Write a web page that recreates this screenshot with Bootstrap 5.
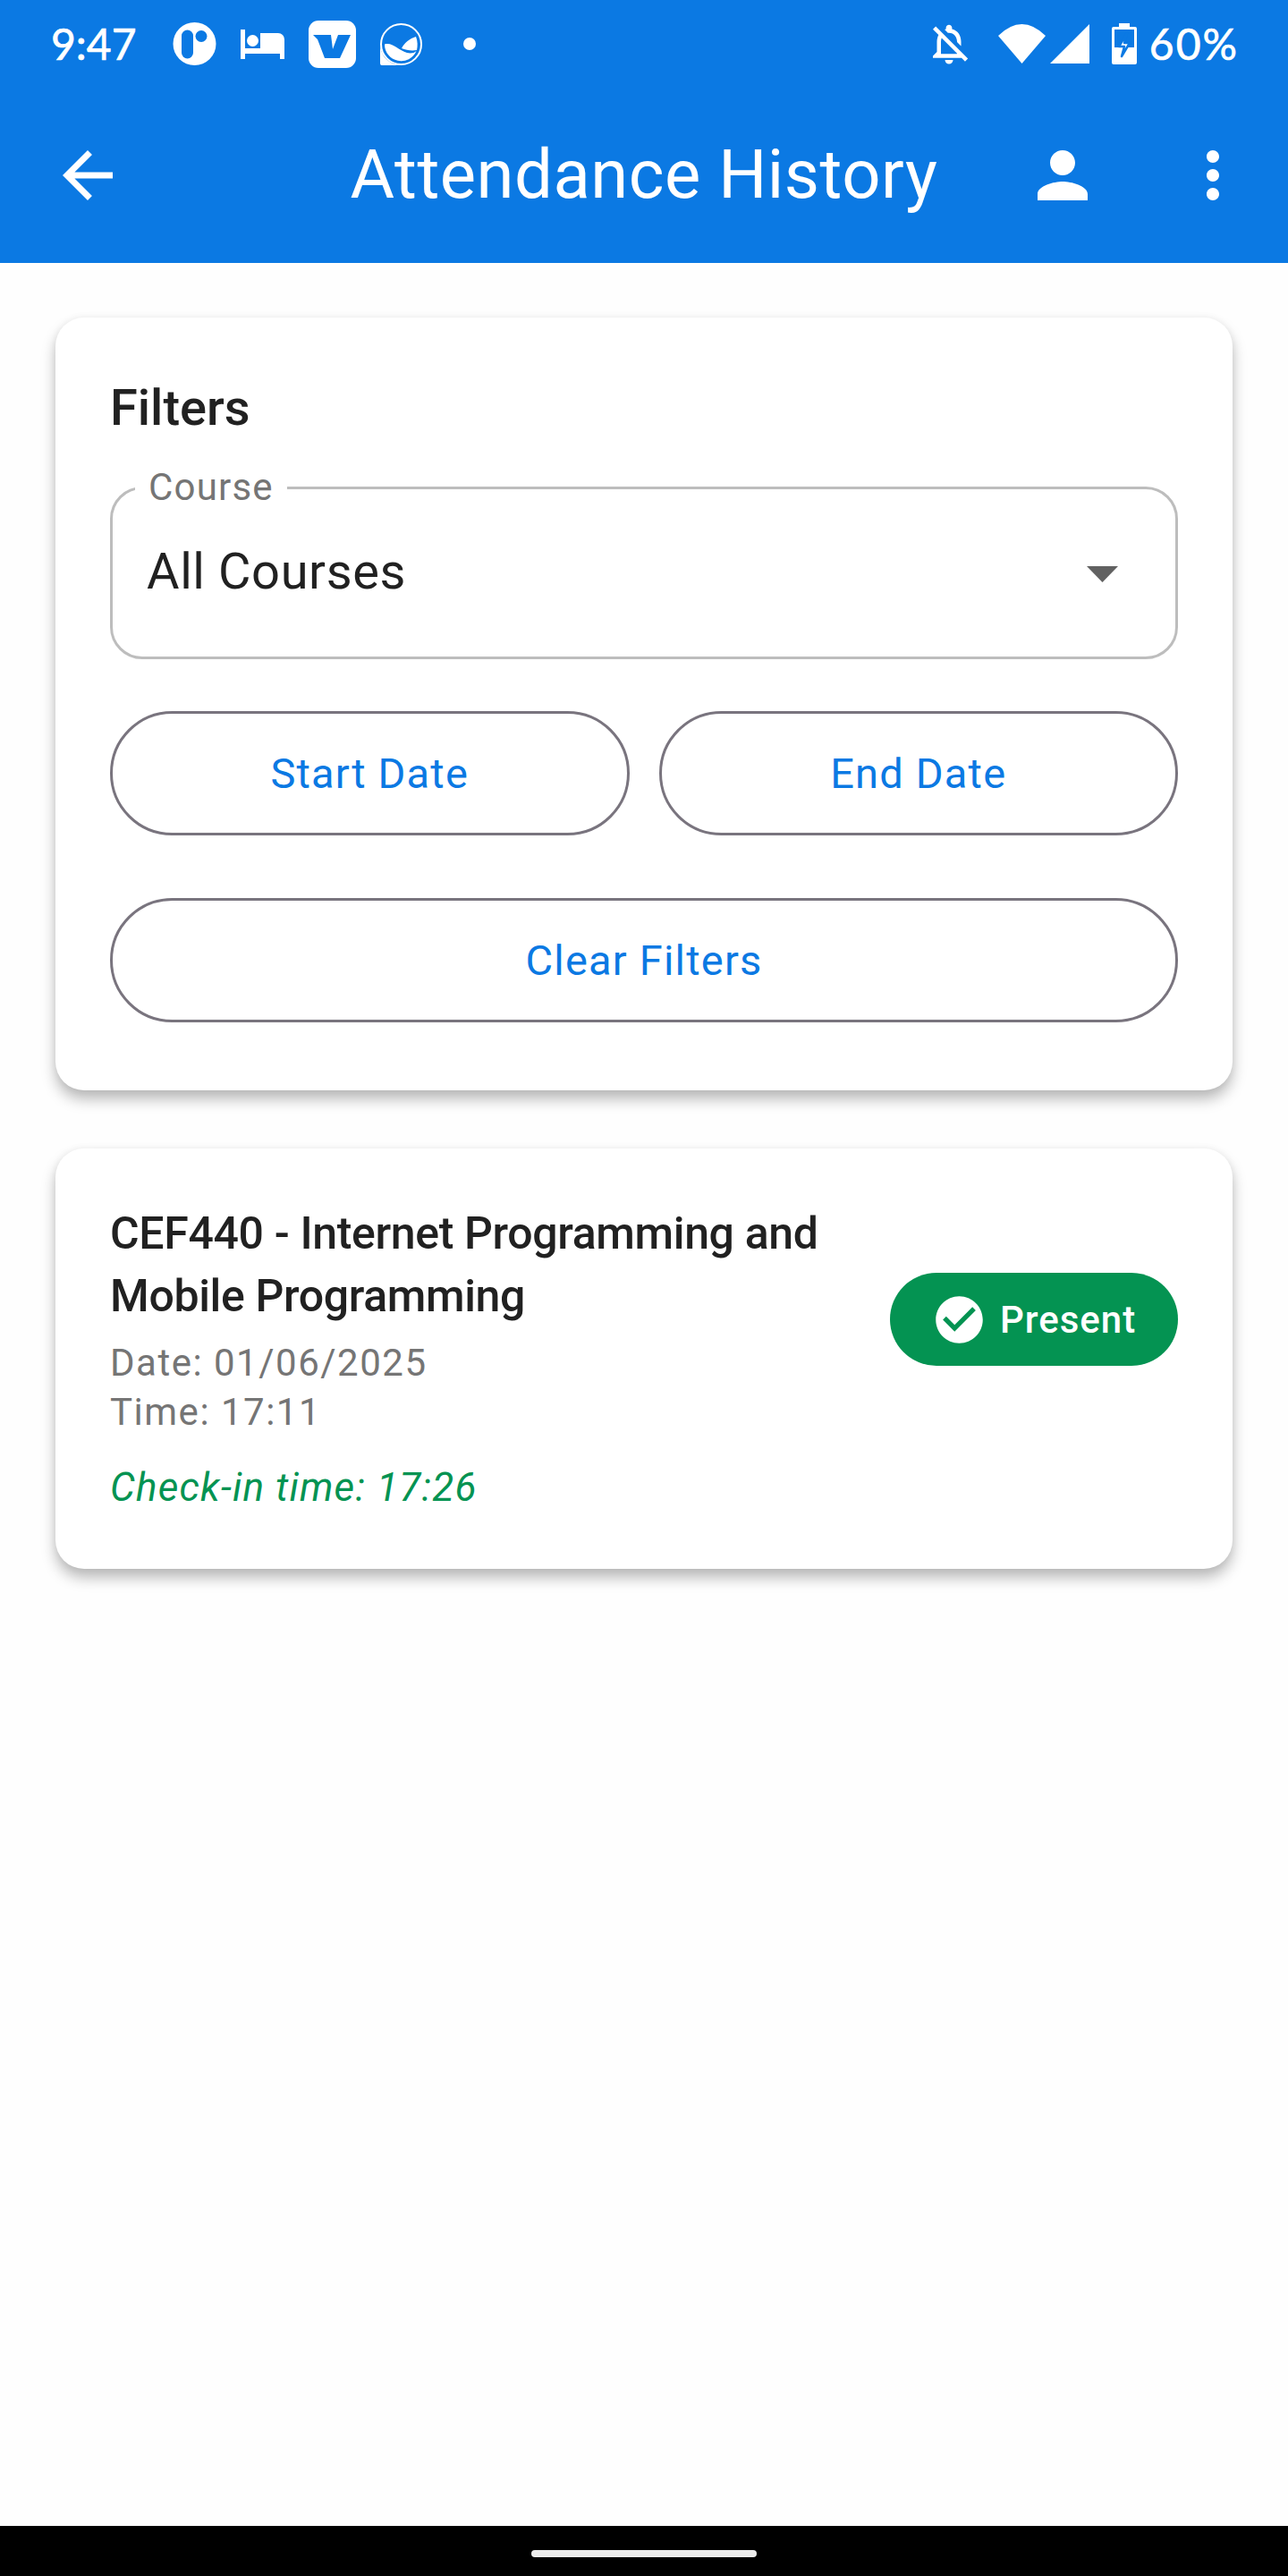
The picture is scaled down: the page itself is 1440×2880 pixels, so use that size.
<!doctype html>
<html lang="en">
<head>
  <meta charset="utf-8">
  <meta name="viewport" content="width=device-width, initial-scale=1">
  <title>Attendance History</title>
  <link rel="stylesheet" href="https://cdn.jsdelivr.net/npm/bootstrap@5.3.0/dist/css/bootstrap.min.css">
  <style>
    body {
      background: #fefefe;
      font-family: Roboto, sans-serif;
    }
    .screen { height: 2880px; }

    /* status bar + toolbar */
    .app-top { background: #0b79e3; height: 294px; color: #fff; }
    .status-row { height: 98px; padding: 0 55px 0 57px; }
    .status-text { font-family: Lato, sans-serif; font-size: 48px; line-height: 1; -webkit-text-stroke: .7px #fff; }
    .status-pct { letter-spacing: 2px; margin-left: 14px; }
    .status-left { margin-left: 40px; gap: 27px; }
    .status-dot { margin-left: 19px; }
    .gap-bell { margin-right: 28px; }
    .gap-wifi { margin-right: 5px; }
    .gap-signal { margin-right: 25px; }
    .toolbar-row {
      display: grid;
      grid-template-columns: 1fr auto 1fr;
      height: 196px;
      padding: 0 42px;
    }
    .toolbar-title { font-size: 76px; font-weight: 400; line-height: 1; letter-spacing: .5px; margin: -3px 0 0; }
    .toolbar-actions { gap: 84px; }
    .toolbar-back { margin-left: 14px; }

    /* cards */
    .panel {
      border: 0;
      border-radius: 32px;
      background: #fff;
      box-shadow: 0 10px 16px rgba(0,0,0,.27), 0 0 8px rgba(0,0,0,.05);
    }
    .panel-filters { margin: 61px 62px 0; padding: 66px 61px 76px; }
    .panel-record { margin: 65px 62px 0; padding: 60px 61px 63px; }
    .panel-title { font-size: 56px; font-weight: 500; line-height: 70px; color: #212121; margin: 0 0 53px; }

    .course-select {
      position: relative;
      height: 193px;
      border: 3.5px solid #bdbdbd;
      border-radius: 36px;
      padding: 0 38px;
    }
    .course-label {
      position: absolute;
      top: -19px;
      left: 25px;
      background: #fff;
      padding: 0 15px;
      font-size: 42px;
      line-height: 34px;
      letter-spacing: 1.2px;
      color: #757575;
    }
    .course-value { font-size: 56px; letter-spacing: .6px; color: #212121; margin-top: -4px; }
    .course-caret { width: 35px; height: 18px; margin: 3px 26px 0 0; }

    .date-row { gap: 33px; margin-top: 58px; }
    .pill-btn {
      height: 139px;
      border: 3.5px solid #79747e;
      background: transparent;
      color: #0b79e3;
      font-size: 47px;
      letter-spacing: 1.2px;
      line-height: 1;
    }
    .pill-clear { margin-top: 70px; }

    .record-title { font-size: 50px; font-weight: 500; line-height: 70px; letter-spacing: -.35px; color: #212121; margin: 0 0 12px; }
    .record-info { font-size: 42px; line-height: 55px; letter-spacing: 1.5px; color: #757575; }
    .record-main { width: 800px; }
    .record-checkin { font-size: 44px; line-height: 55px; letter-spacing: 1.2px; font-style: italic; color: #049352; margin-top: 30px; }
    .status-pill {
      background: #049352;
      height: 104px;
      width: 322px;
      padding: 0 46px;
      gap: 14px;
      color: #fff;
      font-size: 42px;
      font-weight: 500;
      letter-spacing: 1px;
    }

    .nav-strip { background: #000; height: 56px; }
    .nav-handle { width: 252px; height: 8px; background: #ececec; margin-top: 27px; }
  </style>
</head>
<body>
  <div class="screen d-flex flex-column">
    <header class="app-top">
      <div class="status-row d-flex align-items-center justify-content-between">
        <div class="d-flex align-items-center">
          <span class="status-text">9:47</span>
          <div class="status-left d-flex align-items-center">
            <svg width="49" height="48" viewBox="0 0 49 48"><circle cx="24.5" cy="24" r="24" fill="#fff"/><rect x="10" y="8.5" width="13" height="32" rx="6.5" fill="#0b79e3"/><circle cx="32" cy="15.5" r="6.5" fill="#0b79e3"/></svg>
            <svg width="49" height="33" viewBox="0 0 49 33" fill="#fff"><path d="M0 0h5v21h17V4h20a7 7 0 0 1 7 7v22h-5v-6H5v6H0z"/><circle cx="13.5" cy="12.5" r="6.5"/></svg>
            <svg width="53" height="53" viewBox="0 0 53 53"><rect width="53" height="53" rx="11" fill="#fff"/><path d="M5 16h20l2 16 6-16h14L35 42H18L10 21z" fill="#0b79e3"/></svg>
            <svg width="47" height="47" viewBox="0 0 47 47" fill="#fff"><path d="M0 23.5V45a2 2 0 0 0 2 2h21.5A23.5 23.5 0 0 1 0 23.5z"/><circle cx="23.5" cy="23.5" r="22.5" fill="#0b79e3" stroke="#fff" stroke-width="2"/><path d="M5 23.5C14 21 20 30 30 33c4 1 8 .5 10.5-2A18.5 18.5 0 0 1 5 23.5z"/><path d="M24 28c3-6 9-11 16-13 2 5 2 10 1 15-6 1-12 0-17-2z"/></svg>
            <svg class="status-dot" width="14" height="14" viewBox="0 0 14 14"><circle cx="7" cy="7" r="7" fill="#fff"/></svg>
          </div>
        </div>
        <div class="d-flex align-items-center">
          <svg class="gap-bell" width="54" height="54" viewBox="0 0 24 24" fill="#fff"><path d="M12 22c1.1 0 2-.9 2-2h-4c0 1.1.9 2 2 2zm0-15.5c2.49 0 4 2.02 4 4.5v.1l2 2V11c0-3.07-1.63-5.64-4.5-6.32V4c0-.83-.67-1.5-1.5-1.5s-1.5.67-1.5 1.5v.68c-.24.06-.47.15-.69.23l1.64 1.64c.18-.02.36-.05.55-.05zM5.41 3.35L4 4.76l2.81 2.81C6.29 8.57 6 9.74 6 11v5l-2 2v1h14.24l1.74 1.74 1.41-1.41L5.41 3.35zM16 17H8v-6c0-.68.12-1.32.34-1.9L16 16.76V17z"/></svg>
          <svg class="gap-wifi" width="53" height="44" viewBox="0 0 53 44" fill="#fff"><path d="M0 13Q26.5-13 53 13L26.5 44z"/></svg>
          <svg class="gap-signal" width="44" height="44" viewBox="0 0 44 44" fill="#fff"><path d="M44 0v44H0z"/></svg>
          <svg width="28" height="46" viewBox="0 0 28 46"><path d="M8 0h12v4h6a2 2 0 0 1 2 2v38a2 2 0 0 1-2 2H2a2 2 0 0 1-2-2V6a2 2 0 0 1 2-2h6z" fill="#fff"/><path d="M3 7h22v20H3z" fill="#0b79e3"/><path d="M17 11L8 26h6l-3 11 9-15h-6z" fill="#fff" stroke="#0b79e3" stroke-width="2.5" stroke-linejoin="round"/></svg>
          <span class="status-text status-pct">60%</span>
        </div>
      </div>
      <div class="toolbar-row align-items-center">
        <svg class="toolbar-back" width="84" height="84" viewBox="0 0 24 24" fill="#fff"><path d="M20 11H7.83l5.59-5.59L12 4l-8 8 8 8 1.41-1.41L7.83 13H20v-2z"/></svg>
        <h1 class="toolbar-title">Attendance History</h1>
        <div class="toolbar-actions d-flex justify-content-end">
          <svg width="84" height="84" viewBox="0 0 24 24" fill="#fff"><path d="M12 12c2.21 0 4-1.79 4-4s-1.79-4-4-4-4 1.79-4 4 1.79 4 4 4zm0 2c-2.67 0-8 1.34-8 4v2h16v-2c0-2.66-5.33-4-8-4z"/></svg>
          <svg width="84" height="84" viewBox="0 0 24 24" fill="#fff"><path d="M12 8c1.1 0 2-.9 2-2s-.9-2-2-2-2 .9-2 2 .9 2 2 2zm0 2c-1.1 0-2 .9-2 2s.9 2 2 2 2-.9 2-2-.9-2-2-2zm0 6c-1.1 0-2 .9-2 2s.9 2 2 2 2-.9 2-2-.9-2-2-2z"/></svg>
        </div>
      </div>
    </header>

    <main class="flex-grow-1">
      <section class="card panel panel-filters">
        <h2 class="panel-title">Filters</h2>
        <div class="course-select d-flex align-items-center justify-content-between">
          <span class="course-label">Course</span>
          <span class="course-value">All Courses</span>
          <svg class="course-caret" viewBox="0 0 35 18"><path d="M0 0h35L17.5 18z" fill="#616161"/></svg>
        </div>
        <div class="date-row d-flex">
          <button class="btn pill-btn rounded-pill flex-fill w-50">Start Date</button>
          <button class="btn pill-btn rounded-pill flex-fill w-50">End Date</button>
        </div>
        <button class="btn pill-btn pill-clear rounded-pill w-100">Clear Filters</button>
      </section>

      <section class="card panel panel-record">
        <div class="d-flex align-items-center justify-content-between">
          <div class="record-main">
            <h3 class="record-title">CEF440 - Internet Programming and Mobile Programming</h3>
            <div class="record-info">Date: 01/06/2025</div>
            <div class="record-info">Time: 17:11</div>
          </div>
          <span class="status-pill rounded-pill d-inline-flex align-items-center">
            <svg width="63" height="63" viewBox="0 0 24 24" fill="#fff" class="flex-shrink-0"><path d="M12 2C6.48 2 2 6.48 2 12s4.48 10 10 10 10-4.48 10-10S17.52 2 12 2zm-2 15l-5-5 1.41-1.41L10 14.17l7.59-7.59L19 8l-9 9z"/></svg>
            Present
          </span>
        </div>
        <div class="record-checkin">Check-in time: 17:26</div>
      </section>
    </main>

    <div class="nav-strip d-flex justify-content-center">
      <div class="nav-handle rounded-pill"></div>
    </div>
  </div>
  <script src="https://cdn.jsdelivr.net/npm/bootstrap@5.3.0/dist/js/bootstrap.bundle.min.js"></script>
</body>
</html>
